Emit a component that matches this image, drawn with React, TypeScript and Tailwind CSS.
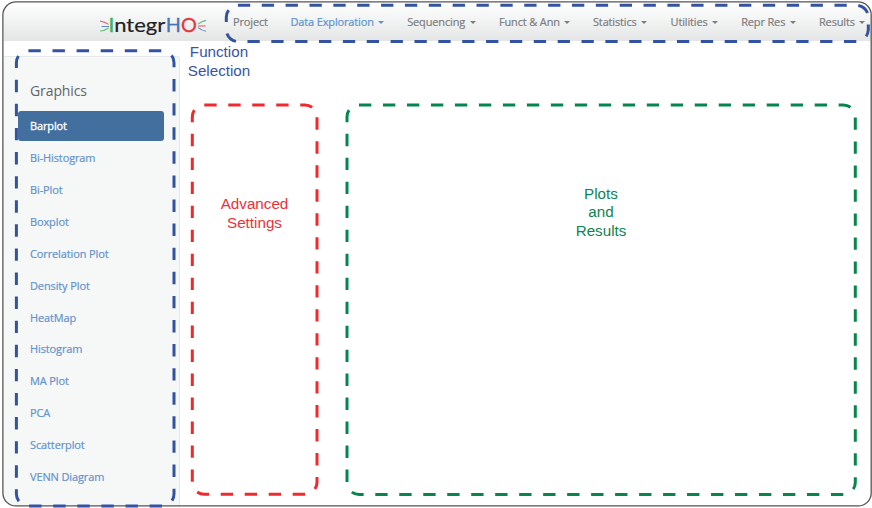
import React from "react";

const navItems = [
  { label: "Project", width: "w-[57.5px]", caret: false, active: false },
  { label: "Data Exploration", width: "w-[116.7px]", caret: true, active: true },
  { label: "Sequencing", width: "w-[91.8px]", caret: true, active: false },
  { label: "Funct & Ann", width: "w-[94px]", caret: true, active: false },
  { label: "Statistics", width: "w-[77.6px]", caret: true, active: false },
  { label: "Utilities", width: "w-[70.6px]", caret: true, active: false },
  { label: "Repr Res", width: "w-[77.8px]", caret: true, active: false },
  { label: "Results", width: "w-[49px]", caret: true, active: false },
];

const sideItems = [
  "Barplot",
  "Bi-Histogram",
  "Bi-Plot",
  "Boxplot",
  "Correlation Plot",
  "Density Plot",
  "HeatMap",
  "Histogram",
  "MA Plot",
  "PCA",
  "Scatterplot",
  "VENN Diagram",
];

type DashedProps = {
  x: number;
  y: number;
  w: number;
  h: number;
  start: number;
  periods: number;
  color: string;
};

/* Rounded outline whose dashes begin `start` pixels after the left edge. */
function Dashed({ x, y, w, h, start, periods, color }: DashedProps) {
  const r = 12;
  const d = `M${x + start} ${y} H${x + w - r} a${r} ${r} 0 0 1 ${r} ${r} V${y + h - r} a${r} ${r} 0 0 1 ${-r} ${r} H${x + r} a${r} ${r} 0 0 1 ${-r} ${-r} V${y + r} a${r} ${r} 0 0 1 ${r} ${-r} H${x + start}`;
  return (
    <path
      d={d}
      fill="none"
      stroke={color}
      strokeWidth="3"
      pathLength={periods * 2}
      strokeDasharray="1.03 0.97"
    />
  );
}

function Logo() {
  return (
    <svg width="112" height="30" viewBox="98.4 6.8 112 30" className="shrink-0 font-['Lato',sans-serif]" fontSize="19">
      <g fill="none" strokeWidth="1.1">
        <path d="M100.5 20.8 Q105 21.5 109 24.2" stroke="#e0585c" />
        <path d="M102 26.3 H109.5" stroke="#5d87c6" />
        <path d="M100.5 30.8 Q105 30.6 109 27.8" stroke="#62bd7c" />
        <path d="M206.5 20.2 Q202 21 198.5 24" stroke="#5cb87a" />
        <path d="M198.5 25.8 H206" stroke="#e0585c" />
        <path d="M206.5 31 Q202 30.4 198.5 27.4" stroke="#5d87c6" />
      </g>
      <text x="109.2" y="31.8" fill="#38b558" stroke="#38b558" strokeWidth="0.6">I</text>
      <text x="114.6" y="31.8" fill="#222" stroke="#222" strokeWidth="0.2" textLength="51" lengthAdjust="spacingAndGlyphs">ntegr</text>
      <text x="166.2" y="31.8" strokeWidth="0.3" textLength="31" lengthAdjust="spacingAndGlyphs">
        <tspan fill="#4a74b8" stroke="#4a74b8">H</tspan>
        <tspan fill="#e93438" stroke="#e93438">O</tspan>
      </text>
    </svg>
  );
}

export default function App() {
  return (
    <div className="relative h-[508px] w-[872px] overflow-hidden bg-white pl-[2px] pt-[1px]">
      <div className="flex h-[506px] w-[869px] flex-col overflow-hidden rounded-[13px] pl-[1.5px] pt-[1px]">
        <header className="flex h-[39px] shrink-0 items-center bg-linear-to-b from-white to-[#e4e6e6] pl-[94.5px]">
          <Logo />
          <nav className="ml-[23px] flex font-['Open_Sans',sans-serif] text-[11px] leading-[16px] tracking-[-0.15px] whitespace-nowrap">
            {navItems.map((item) => (
              <div
                key={item.label}
                className={`flex shrink-0 items-center ${item.width} ${item.active ? "text-[#5b93cf]" : "text-[#7c7d7f]"}`}
              >
                <span className="[-webkit-text-stroke:0.2px_currentColor]">{item.label}</span>
                {item.caret && (
                  <span className="mt-[2px] ml-[4.5px] border-x-[3px] border-t-[3px] border-x-transparent border-t-current" />
                )}
              </div>
            ))}
          </nav>
        </header>

        <div className="flex min-h-0 grow">
          <aside className="mt-[15px] w-[176px] shrink-0 rounded-tr-[3px] border-t border-r border-[#e4e8eb] bg-[#f6f8f8] pl-[14.5px] font-['Open_Sans',sans-serif]">
            <h2 className="mt-[24px] ml-[12px] text-[14px] leading-[20px] tracking-[-0.1px] text-[#626466]">Graphics</h2>
            <ul className="mt-[10.2px] flex w-[145.5px] flex-col gap-[2px] text-[11px] tracking-[-0.12px]">
              {sideItems.map((label, i) => (
                <li
                  key={label}
                  className={`flex h-[29.94px] items-center rounded-[3px] pl-[12px] ${i === 0 ? "bg-[#436f9e] text-white [-webkit-text-stroke:0.3px_white]" : "text-[#6492cb] [-webkit-text-stroke:0.2px_#6492cb]"}`}
                >
                  {label}
                </li>
              ))}
            </ul>
          </aside>

          <main className="flex grow flex-col font-['Liberation_Sans',Arial,sans-serif] text-[15.2px] leading-[18.4px]">
            <p className="mt-[2.4px] ml-[-1px] h-[36px] w-[81px] text-center text-[#3a53a4]">
              Function
              <br />
              Selection
            </p>
            <div className="mt-[24.6px] ml-[12.5px] flex gap-[30px]">
              <section className="flex h-[390px] w-[125px] justify-center pt-[91.3px] text-center text-[#ee3038]">
                Advanced
                <br />
                Settings
              </section>
              <section className="flex h-[390px] w-[508px] justify-center pt-[81px] text-center text-[#0d8452]">
                <p>
                  Plots
                  <br />
                  and
                  <br />
                  Results
                </p>
              </section>
            </div>
          </main>
        </div>
      </div>

      <svg className="pointer-events-none absolute inset-0" width="872" height="508">
        <rect x="2.9" y="1.9" width="868.3" height="504" rx="13" fill="none" stroke="#555" strokeWidth="1.3" />
        <Dashed x={226.3} y={5.3} w={642} h={36.3} start={11.6} periods={56} color="#3353a2" />
        <Dashed x={16.4} y={50.7} w={157.6} h={455.3} start={12} periods={50} color="#3353a2" />
        <Dashed x={192.3} y={104.9} w={124.7} h={389.4} start={12} periods={42} color="#ee2a2e" />
        <Dashed x={347} y={104.9} w={508.3} h={389.6} start={12} periods={74} color="#07854f" />
      </svg>
    </div>
  );
}
